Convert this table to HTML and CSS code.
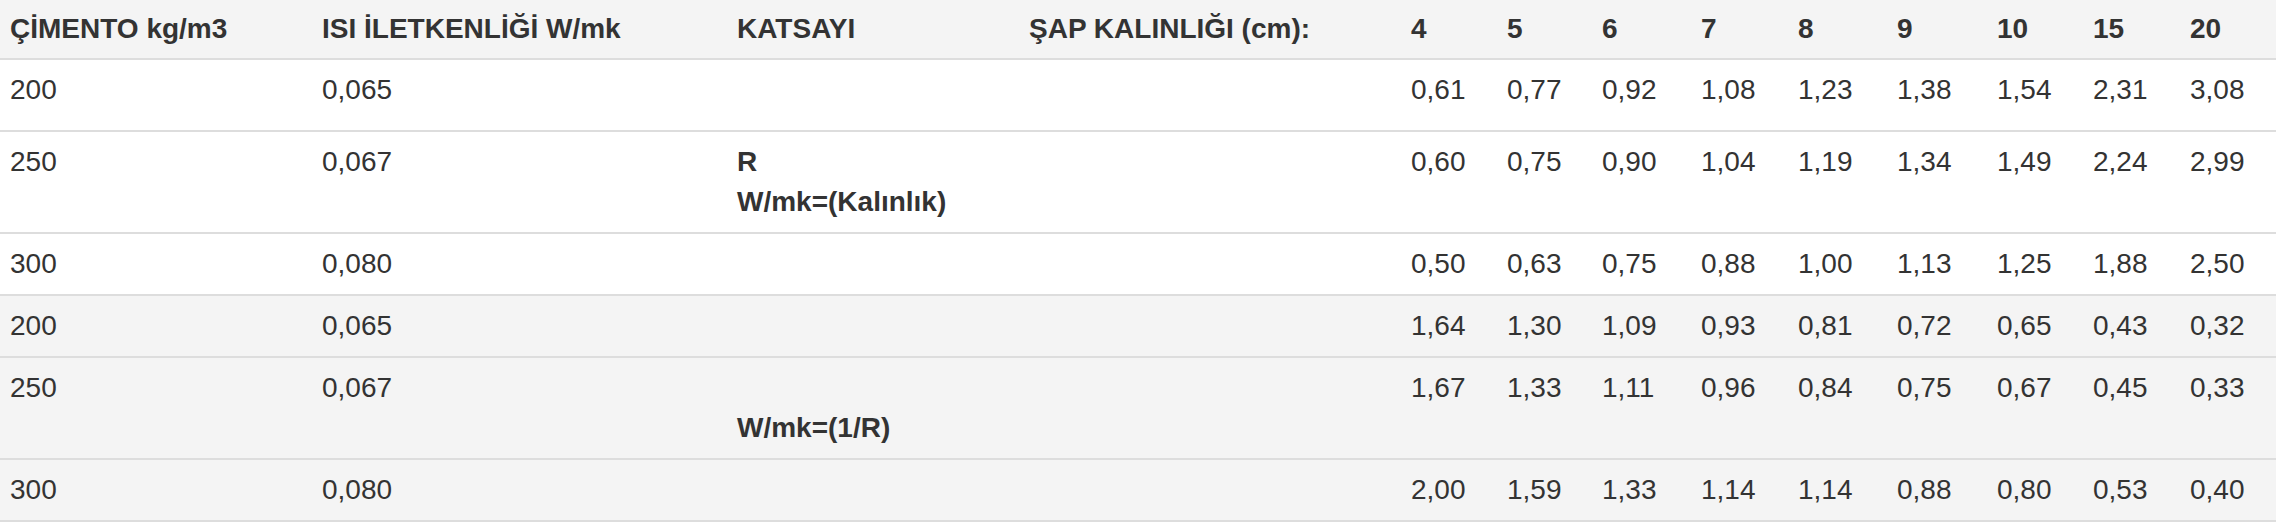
FILE: index.html
```html
<!DOCTYPE html>
<html lang="tr">
<head>
<meta charset="utf-8">
<title>Şap ısı iletkenliği tablosu</title>
<link rel="stylesheet" href="styles.css">
</head>
<body>
<table class="data-table">
  <colgroup>
    <col class="c-cement">
    <col class="c-cond">
    <col class="c-coef">
    <col class="c-thick">
    <col class="c-n4">
    <col class="c-n5">
    <col class="c-n6">
    <col class="c-n7">
    <col class="c-n8">
    <col class="c-n9">
    <col class="c-n10">
    <col class="c-n15">
    <col class="c-n20">
  </colgroup>
  <thead>
    <tr>
      <th>ÇİMENTO kg/m3</th>
      <th>ISI İLETKENLİĞİ W/mk</th>
      <th>KATSAYI</th>
      <th>ŞAP KALINLIĞI (cm):</th>
      <th>4</th><th>5</th><th>6</th><th>7</th><th>8</th><th>9</th><th>10</th><th>15</th><th>20</th>
    </tr>
  </thead>
  <tbody>
    <tr class="row-white row-extra">
      <td>200</td><td>0,065</td><td></td><td></td>
      <td>0,61</td><td>0,77</td><td>0,92</td><td>1,08</td><td>1,23</td><td>1,38</td><td>1,54</td><td>2,31</td><td>3,08</td>
    </tr>
    <tr class="row-white">
      <td>250</td><td>0,067</td><td class="formula">R<br>W/mk=(Kalınlık)</td><td></td>
      <td>0,60</td><td>0,75</td><td>0,90</td><td>1,04</td><td>1,19</td><td>1,34</td><td>1,49</td><td>2,24</td><td>2,99</td>
    </tr>
    <tr class="row-white">
      <td>300</td><td>0,080</td><td></td><td></td>
      <td>0,50</td><td>0,63</td><td>0,75</td><td>0,88</td><td>1,00</td><td>1,13</td><td>1,25</td><td>1,88</td><td>2,50</td>
    </tr>
    <tr class="row-gray">
      <td>200</td><td>0,065</td><td></td><td></td>
      <td>1,64</td><td>1,30</td><td>1,09</td><td>0,93</td><td>0,81</td><td>0,72</td><td>0,65</td><td>0,43</td><td>0,32</td>
    </tr>
    <tr class="row-gray">
      <td>250</td><td>0,067</td><td class="formula"><br>W/mk=(1/R)</td><td></td>
      <td>1,67</td><td>1,33</td><td>1,11</td><td>0,96</td><td>0,84</td><td>0,75</td><td>0,67</td><td>0,45</td><td>0,33</td>
    </tr>
    <tr class="row-gray">
      <td>300</td><td>0,080</td><td></td><td></td>
      <td>2,00</td><td>1,59</td><td>1,33</td><td>1,14</td><td>1,14</td><td>0,88</td><td>0,80</td><td>0,53</td><td>0,40</td>
    </tr>
  </tbody>
</table>
</body>
</html>
```

FILE: styles.css
```css
html, body {
  margin: 0;
  padding: 0;
  background: #ffffff;
}

body {
  font-family: "Liberation Sans", Arial, Helvetica, sans-serif;
  font-size: 28px;
  line-height: 40px;
  color: #333333;
}

.data-table {
  width: 2276px;
  border-collapse: collapse;
  table-layout: fixed;
}

.c-cement { width: 312px; }
.c-cond { width: 415px; }
.c-coef { width: 292px; }
.c-thick { width: 382px; }
.c-n4 { width: 96px; }
.c-n5 { width: 95px; }
.c-n6 { width: 99px; }
.c-n7 { width: 97px; }
.c-n8 { width: 99px; }
.c-n9 { width: 100px; }
.c-n10 { width: 96px; }
.c-n15 { width: 97px; }
.c-n20 { width: 96px; }

.data-table th,
.data-table td {
  padding: 10px 10px 10px 10px;
  text-align: left;
  vertical-align: top;
  white-space: nowrap;
}

.data-table thead th {
  background: #f4f4f4;
  font-weight: bold;
  padding-top: 9px;
  padding-bottom: 9px;
  border-bottom: 2px solid #dddddd;
}

.data-table tbody td {
  border-bottom: 2px solid #dddddd;
}

.row-white td {
  background: #ffffff;
}

.row-gray td {
  background: #f4f4f4;
}

.row-extra td {
  padding-bottom: 20px;
}

.formula {
  font-weight: bold;
}
```
